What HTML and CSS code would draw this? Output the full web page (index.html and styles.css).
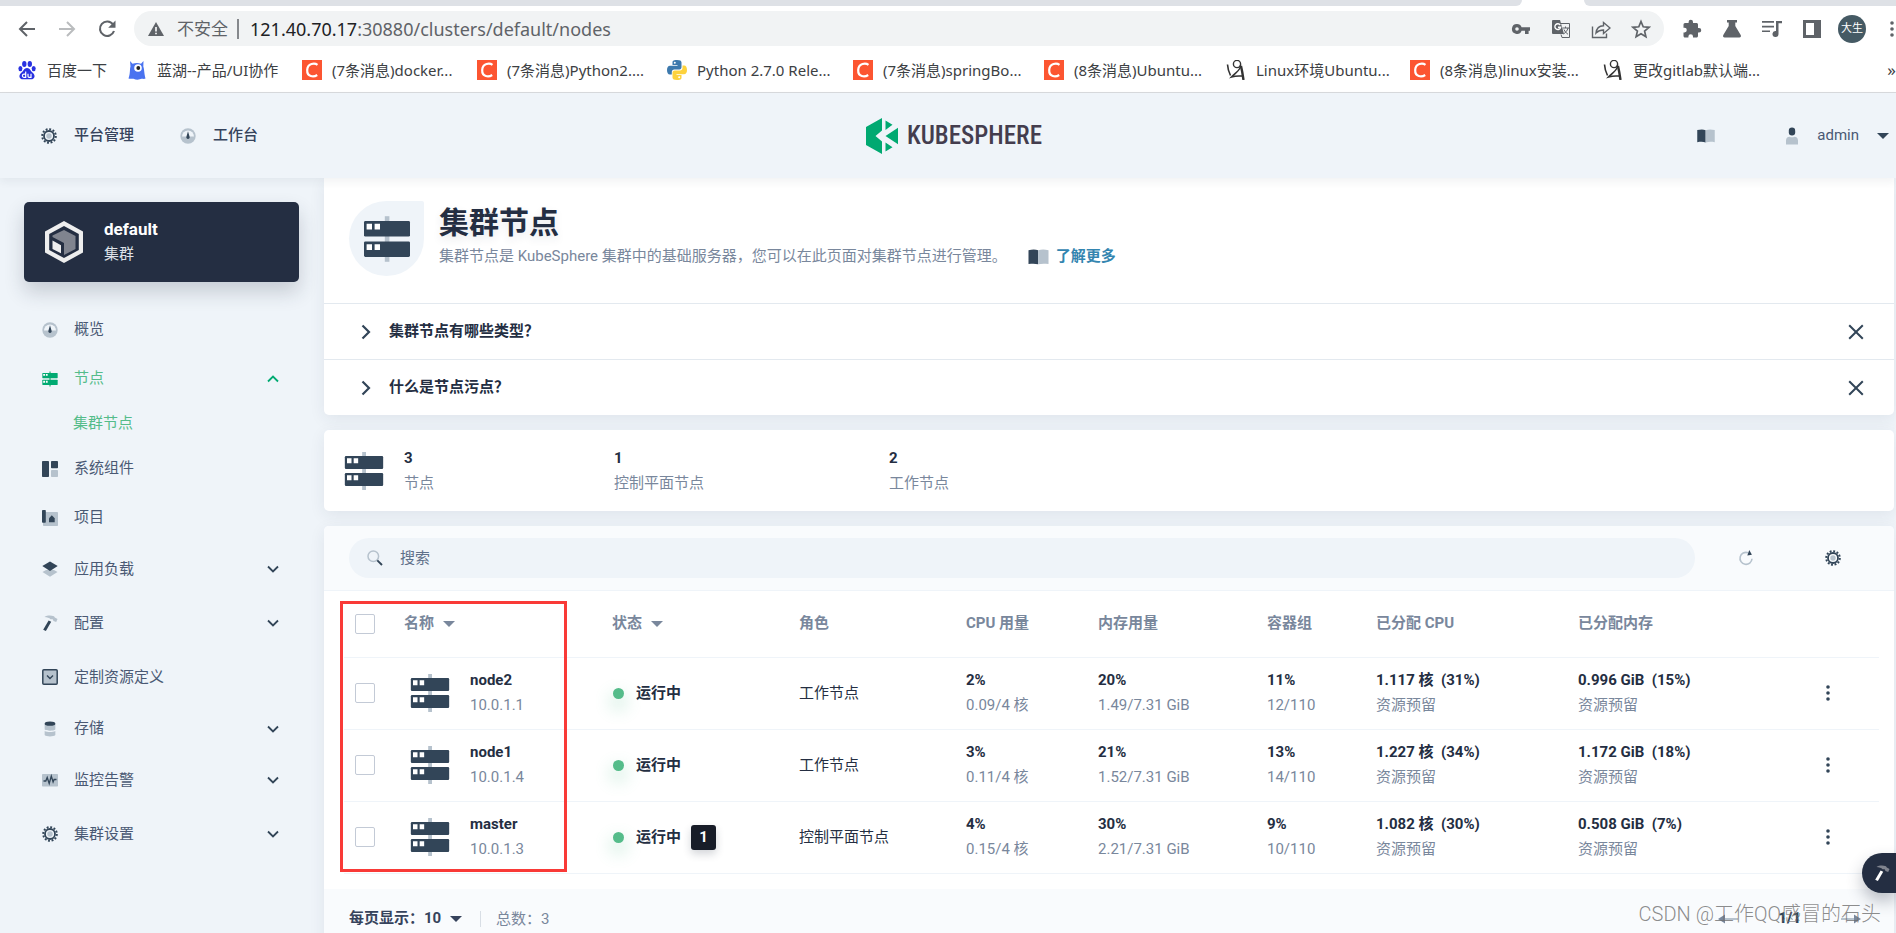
FILE: index.html
```html
<!DOCTYPE html>
<html lang="zh-CN">
<head>
<meta charset="utf-8">
<title>集群节点</title>
<link rel="stylesheet" href="styles.css">
</head>
<body>
<svg class="sprite" aria-hidden="true">
  <symbol id="i-server" viewBox="0 0 24 24">
    <path class="lite" d="M10.9.6h2.3v22.8h-2.3z"/>
    <rect x=".5" y="3" width="23" height="7.8" rx=".7"/>
    <rect x=".5" y="13.2" width="23" height="7.8" rx=".7"/>
    <path fill="#fff" d="M1.8 4.4h2.7v2.9H1.8zM5.8 4.4h2.7v2.9H5.8zM1.8 14.6h2.7v2.9H1.8zM5.8 14.6h2.7v2.9H5.8z"/>
  </symbol>
  <symbol id="i-gear" viewBox="0 0 16 16">
    <circle cx="8" cy="8" r="6.8" fill="none" stroke="currentColor" stroke-width="2" stroke-dasharray="1.9 1.66"/>
    <circle cx="8" cy="8" r="5" fill="none" stroke="currentColor" stroke-width="1.8"/>
    <circle class="lite" cx="8" cy="8" r="2.7"/>
  </symbol>
  <symbol id="i-gauge" viewBox="0 0 16 16">
    <circle class="lite" cx="8" cy="8" r="7.7"/>
    <path fill="#eff4f9" d="M2 8.4a6 6 0 0 1 12 0z"/>
    <path d="M8 3.2l1.6 5.6a1.7 1.7 0 1 1-3.2 0z"/>
  </symbol>
  <symbol id="i-book" viewBox="0 0 20 16">
    <path d="M0 1.2C4 .2 7 .2 9.6 1.3v14C7 14.500 4 14.500 0 15z"/>
    <path class="lite" d="M9.600 1.300C13 .2 16 .2 20 1.200V15c-4-.5-7-.5-10.400.3z"/>
  </symbol>
  <symbol id="i-user" viewBox="0 0 14 18">
    <rect x="3.800" y=".5" width="6.400" height="8" rx="3.200"/>
    <path class="lite" d="M1 17.500v-4C1 10.800 3 9.800 4.500 9.800c1.500.7 3.500.7 5 0 1.500 0 3.500 1 3.500 3.700v4z"/>
  </symbol>
  <symbol id="i-blocks" viewBox="0 0 16 16">
    <rect width="7" height="16" rx=".8"/><rect x="9" width="7" height="7.300" rx=".8"/>
    <rect class="lite" x="9" y="9" width="7" height="7" rx=".8"/>
  </symbol>
  <symbol id="i-project" viewBox="0 0 16 16">
    <rect class="lite" x="1" y="2" width="15" height="14" rx=".8"/>
    <rect width="3.800" height="12.800" rx=".8"/>
    <path d="M7 12.300V8.200l2.800-3 2.900 3v4.100z"/>
  </symbol>
  <symbol id="i-layers" viewBox="0 0 16 16">
    <path class="lite" d="M.5 11L4 9h8l3.500 2L8 15.800z"/>
    <path d="M8 .4l7.700 4.700L8 9.900.3 5.100z"/>
  </symbol>
  <symbol id="i-hammer" viewBox="0 0 16 16">
    <path class="lite" d="M2.500 2C5 .2 9 .1 12 1.200l.8 1.300 2.700 1.600-1.300 3-2.700-1.200-.8-1.600-2.200 0C7.500 2.800 5 2.200 2.500 2z"/>
    <path d="M6.600 5.500l2.600 1.200L3.900 16 1.200 14.800z"/>
  </symbol>
  <symbol id="i-crd" viewBox="0 0 16 16">
    <rect class="lite" x="1" y="1" width="14" height="14"/>
    <rect x=".8" y=".8" width="14.400" height="14.400" rx="1" fill="none" stroke="currentColor" stroke-width="1.500"/>
    <path fill="none" stroke="currentColor" stroke-width="1.400" d="M5 6.400l3 3 3-3"/>
  </symbol>
  <symbol id="i-storage" viewBox="0 0 16 18">
    <path class="lite" d="M2 3h12v6.500c-2 1.800-10 1.800-12 0zM2 11.200c3 1.500 9 1.500 12 0v4.600c-2 2.200-10 2.200-12 0z"/>
    <ellipse cx="8" cy="3" rx="6" ry="2.400"/>
  </symbol>
  <symbol id="i-monitor" viewBox="0 0 16 16">
    <rect class="lite" y="2" width="16" height="12.500" rx=".8"/>
    <path fill="none" stroke="currentColor" stroke-width="1.300" d="M1.500 9h2.300l1.400-3.500 2 6L9.300 4l1.800 6 1-2.500h2.400"/>
  </symbol>
  <symbol id="i-chev" viewBox="0 0 12 12"><path fill="none" stroke="currentColor" stroke-width="1.800" d="M1 3.500l5 5 5-5"/></symbol>
  <symbol id="i-right" viewBox="0 0 16 16"><path fill="none" stroke="currentColor" stroke-width="2.200" d="M4.500 1.500L11 8l-6.500 6.500"/></symbol>
  <symbol id="i-close" viewBox="0 0 16 16"><path fill="none" stroke="currentColor" stroke-width="2" d="M1.200 1.200l13.600 13.600M14.800 1.200L1.200 14.800"/></symbol>
  <symbol id="i-caret" viewBox="0 0 12 6"><path d="M0 0h12L6 6z"/></symbol>
  <symbol id="i-more" viewBox="0 0 4 16"><circle cx="2" cy="2" r="1.800"/><circle cx="2" cy="8" r="1.800"/><circle cx="2" cy="14" r="1.800"/></symbol>
  <symbol id="i-search" viewBox="0 0 16 16">
    <circle cx="6.300" cy="6.300" r="5.300" fill="none" stroke="#b6c2cd" stroke-width="1.500"/>
    <path stroke="currentColor" stroke-width="1.900" d="M10.300 10.300l4.700 4.700"/>
  </symbol>
  <symbol id="i-refresh" viewBox="0 0 16 16">
    <path fill="none" stroke="#b6c2cd" stroke-width="1.600" d="M10 2.700A6 6 0 1 0 14 8.800"/>
    <path d="M11.300 0l2.600 4.800-4.600.6z"/>
  </symbol>
  <symbol id="i-arrow" viewBox="0 0 20 12"><path d="M0 6l7-4.500v9z"/><path class="lite" d="M7 5h13v2H7z"/></symbol>
  <symbol id="i-csdn" viewBox="0 0 20 20"><path fill="#fc5531" d="M0 0h20v20H0z"/><path fill="none" stroke="#fff" stroke-width="2.200" d="M15.500 4.800C12.800 2.900 5.500 3 5.200 10s6.500 7.400 10 5"/></symbol>
  <symbol id="i-figure" viewBox="0 0 20 20"><g fill="none" stroke="#333"><circle cx="11" cy="4" r="3.600" stroke-width="1.400"/><path stroke-width="1.600" d="M1.500 4.500c.3 5 1.500 8 3 11M14.500 5c.8 5-5 7.500-9 12 5-1.500 7-1 10.500-1"/><path stroke-width="2.400" d="M15 6c1.200 5 1.800 9 2.500 14"/></g></symbol>
</svg>

<div class="tabstrip"><span class="tabs-left"></span><span class="tabs-right"></span></div>
<div class="toolbar">
  <div class="nav-buttons">
    <button type="button" aria-label="后退"><svg viewBox="0 0 20 20"><path fill="none" stroke="#5f6368" stroke-width="2" d="M18 10H3M10 3l-7 7 7 7"/></svg></button>
    <button type="button" aria-label="前进"><svg viewBox="0 0 20 20"><path fill="none" stroke="#babcbe" stroke-width="2" d="M2 10h15M10 3l7 7-7 7"/></svg></button>
    <button type="button" aria-label="刷新"><svg viewBox="0 0 20 20"><path fill="none" stroke="#5f6368" stroke-width="2.100" d="M16 5.500A7.200 7.200 0 1 0 17 12"/><path d="M18.500 1.500v7.300h-7.300z"/></svg></button>
  </div>
  <div class="omnibox">
    <svg class="warn" viewBox="0 0 16 16"><path d="M8 1l8 14H0z"/><path fill="#fff" d="M7.200 6h1.600v4.500H7.200zM7.200 11.700h1.600v1.600H7.200z"/></svg>
    <span class="insecure">不安全</span><span class="sep"></span>
    <span class="url"><b>121.40.70.17</b>:30880/clusters/default/nodes</span>
    <div class="omni-icons">
      <button type="button" aria-label="密码"><svg viewBox="0 0 20 20"><path fill-rule="evenodd" d="M6 5a5 5 0 1 0 4.600 6.800H14V15h3.600v-3.200H19V8.200h-8.400A5 5 0 0 0 6 5zm0 3.200a1.800 1.800 0 1 1 0 3.600 1.800 1.800 0 0 1 0-3.600z"/></svg></button>
      <button type="button" aria-label="翻译"><svg viewBox="0 0 20 20"><path d="M2 1h7l4 14H2a1 1 0 0 1-1-1V2a1 1 0 0 1 1-1z"/><path fill="none" stroke="#fff" stroke-width="1.400" d="M9.200 6A2.900 2.900 0 1 0 9.600 8.300H7"/><path fill="none" stroke="#5f6368" d="M10 4.500h8.500v14H11l-1-3M11.500 9h6.500M14.500 7.500V9M17 9c-.7 3-2.500 4.500-4.500 6M13 10.500c1 2.500 2.500 3.500 4 4.800"/></svg></button>
      <button type="button" aria-label="分享"><svg viewBox="0 0 20 20"><path fill="none" stroke="#5f6368" stroke-width="1.400" d="M1.500 7.500v11h14v-4M5 14c.5-4.500 3-7 7.500-7.200V3.500L19 9l-6.500 5.500V11C9 11 7 12 5 14z"/></svg></button>
      <button type="button" aria-label="收藏"><svg viewBox="0 0 20 20"><path fill="none" stroke="#5f6368" stroke-width="1.700" d="M10 2.500l2.200 5.300 5.800.5-4.400 3.800 1.300 5.600L10 14.700l-4.900 3 1.300-5.600L2 8.300l5.800-.5z"/></svg></button>
    </div>
  </div>
  <div class="ext-icons">
    <button type="button" aria-label="扩展"><svg viewBox="0 0 20 20"><path d="M17 9h-1V5.500c0-.8-.7-1.500-1.500-1.500H11V3a2.200 2.200 0 0 0-4.400 0v1H3a1.500 1.500 0 0 0-1.500 1.500v3.300h1a2.300 2.300 0 0 1 0 4.600h-1V17c0 .8.7 1.500 1.500 1.500h3.400v-1a2.300 2.300 0 0 1 4.600 0v1h3.500c.8 0 1.500-.7 1.500-1.500v-3.500h1A2.250 2.250 0 0 0 17 9z"/></svg></button>
    <button type="button" aria-label="实验"><svg viewBox="0 0 20 20"><path d="M5 1h10v2.500h-1.700V7l5.400 9c.7 1.200 0 2.500-1.300 2.500H2.600c-1.300 0-2-1.300-1.300-2.500l5.400-9V3.500H5z"/></svg></button>
    <button type="button" aria-label="媒体"><svg viewBox="0 0 20 20"><path d="M0 2h12v1.700H0zM0 6.700h12v1.700H0zM0 11.400h8v1.700H0zM14 2h6v2.200h-3.500V15a3 3 0 1 1-2.500-3z"/></svg></button>
    <button type="button" aria-label="侧边栏"><svg viewBox="0 0 20 20"><path fill-rule="evenodd" d="M1 1h18v18H1zM4 4v12h8V4z"/></svg></button>
    <button type="button" class="avatar">大生</button>
    <button type="button" class="menu" aria-label="菜单"><svg><use href="#i-more"/></svg></button>
  </div>
</div>
<nav class="bookmarks" aria-label="书签">
  <a href="#"><svg class="baidu" viewBox="0 0 20 20"><ellipse cx="7.300" cy="4" rx="2.200" ry="3"/><ellipse cx="12.800" cy="4" rx="2.200" ry="3"/><ellipse cx="3.400" cy="8.600" rx="2" ry="2.700"/><ellipse cx="16.700" cy="8.600" rx="2" ry="2.700"/><path d="M10 8c3 0 3.500 3 5.500 4.500 4 3.500 1.500 7-1.500 6.800H6c-3 .2-5.500-3.300-1.500-6.800C6.500 11 7 8 10 8z"/><path fill="none" stroke="#fff" stroke-width="1.200" d="M8.700 11.500v5.800H7a1.500 1.500 0 0 1 0-3.200h1.700M11 13.700v2.600q0 1 1 1h2v-3.600"/></svg>百度一下</a>
  <a href="#"><svg viewBox="0 0 20 20"><path fill="#4a73f0" d="M3 1l2.500 2.800Q10 2.300 14 3.800L16.500 1l-.2 5.500C17.500 10 17 13 18.500 18.500c-1.500 1-3 0-4 .3-2 1-5.500 1.200-8 0-1.500-.5-3 .6-5-.3C3.500 13 2.500 10 3.500 6.500z"/><circle cx="11" cy="8" r="3.800" fill="#fff"/><circle cx="11.300" cy="8" r="1.900" fill="#222"/></svg>蓝湖--产品/UI协作</a>
  <a href="#"><svg><use href="#i-csdn"/></svg>(7条消息)docker...</a>
  <a href="#"><svg><use href="#i-csdn"/></svg>(7条消息)Python2....</a>
  <a href="#"><svg viewBox="0 0 20 20"><path fill="#3d79ad" d="M10 0C5.500 0 5.500 1.500 5.500 2.500V5h5v.8H3C1 5.800 0 7.500 0 10s1 4.500 2.800 4.500h2V12c0-1.500 1-2.500 2.500-2.500h5c1.500 0 2.200-1 2.200-2.200V2.500C14.500.8 13 0 10 0z"/><path fill="#fdd23c" d="M10 20c4.500 0 4.500-1.500 4.500-2.500V15h-5v-.8H17c2 0 3-1.700 3-4.200s-1-4.500-2.800-4.500h-1.700V8c0 1.500-1 2.500-2.500 2.500H7.700c-1.500 0-2.200 1-2.200 2.200v4.800c0 1.700 1.500 2.500 4.500 2.500z"/><circle cx="7.800" cy="2.700" r="1" fill="#fff"/><circle cx="12.200" cy="17.300" r="1" fill="#fff"/></svg>Python 2.7.0 Rele...</a>
  <a href="#"><svg><use href="#i-csdn"/></svg>(7条消息)springBo...</a>
  <a href="#"><svg><use href="#i-csdn"/></svg>(8条消息)Ubuntu...</a>
  <a href="#"><svg><use href="#i-figure"/></svg>Linux环境Ubuntu...</a>
  <a href="#"><svg><use href="#i-csdn"/></svg>(8条消息)linux安装...</a>
  <a href="#"><svg><use href="#i-figure"/></svg>更改gitlab默认端...</a>
  <button type="button" class="overflow" aria-label="更多书签">»</button>
</nav>

<header class="topbar">
  <nav class="topnav">
    <a href="#"><svg class="ic16"><use href="#i-gear"/></svg>平台管理</a>
    <a href="#"><svg class="ic16"><use href="#i-gauge"/></svg>工作台</a>
  </nav>
  <a class="logo" href="#"><svg viewBox="0 0 32 36"><path fill="#00a971" d="M16 0v12.500L9.500 18l6.500 5.500V36L0 27V9zM19.500 2.500l7 4.200-7 5.300zM32 9.800v16.500L19.500 18zM19.500 24.500l7 4.800-7 4.200z"/></svg><span>KUBESPHERE</span></a>
  <div class="userbar">
    <a href="#" aria-label="文档"><svg class="book-sm"><use href="#i-book"/></svg></a>
    <button type="button" class="user"><svg class="user-ic"><use href="#i-user"/></svg><span>admin</span><svg class="caret"><use href="#i-caret"/></svg></button>
  </div>
</header>

<div class="layout">
  <aside class="sidebar">
    <div class="cluster">
      <svg viewBox="0 0 38 42"><path fill="#eee" fill-rule="evenodd" d="M19 0l19 10.500v21L19 42 0 31.500v-21zm0 5L4.200 13v16L19 37l14.800-8V13z"/><path fill="#80848f" d="M19 9l11.500 6v13L19 34V22L7.500 16v-1.500z"/><path fill="#eee" d="M7.500 19.500l8.500 4.800v8L7.500 28z"/></svg>
      <div><strong>default</strong><span>集群</span></div>
    </div>
    <nav class="menu-list">
      <a href="#"><svg class="ic16"><use href="#i-gauge"/></svg>概览</a>
      <a href="#" class="on"><svg class="ic16 solid"><use href="#i-server"/></svg>节点<svg class="chev up"><use href="#i-chev"/></svg></a>
      <a href="#" class="sub">集群节点</a>
      <a href="#"><svg class="ic16"><use href="#i-blocks"/></svg>系统组件</a>
      <a href="#"><svg class="ic16"><use href="#i-project"/></svg>项目</a>
      <a href="#" class="tall"><svg class="ic16"><use href="#i-layers"/></svg>应用负载<svg class="chev"><use href="#i-chev"/></svg></a>
      <a href="#" class="tall"><svg class="ic16"><use href="#i-hammer"/></svg>配置<svg class="chev"><use href="#i-chev"/></svg></a>
      <a href="#" class="tall"><svg class="ic16"><use href="#i-crd"/></svg>定制资源定义</a>
      <a href="#"><svg class="ic16"><use href="#i-storage"/></svg>存储<svg class="chev"><use href="#i-chev"/></svg></a>
      <a href="#" class="tall"><svg class="ic16"><use href="#i-monitor"/></svg>监控告警<svg class="chev"><use href="#i-chev"/></svg></a>
      <a href="#" class="tall"><svg class="ic16"><use href="#i-gear"/></svg>集群设置<svg class="chev"><use href="#i-chev"/></svg></a>
    </nav>
  </aside>

  <main class="content">
    <section class="card banner">
      <div class="banner-head">
        <div class="banner-icon"><svg><use href="#i-server"/></svg></div>
        <div>
          <h1>集群节点</h1>
          <p>集群节点是 KubeSphere 集群中的基础服务器，您可以在此页面对集群节点进行管理。<a href="#"><svg><use href="#i-book"/></svg>了解更多</a></p>
        </div>
      </div>
      <div class="tip"><button type="button" class="tip-toggle"><svg><use href="#i-right"/></svg>集群节点有哪些类型？</button><button type="button" aria-label="关闭"><svg><use href="#i-close"/></svg></button></div>
      <div class="tip"><button type="button" class="tip-toggle"><svg><use href="#i-right"/></svg>什么是节点污点？</button><button type="button" aria-label="关闭"><svg><use href="#i-close"/></svg></button></div>
    </section>

    <section class="card stats">
      <svg class="ic40"><use href="#i-server"/></svg>
      <div class="pair"><strong>3</strong><span>节点</span></div>
      <div class="pair"><strong>1</strong><span>控制平面节点</span></div>
      <div class="pair"><strong>2</strong><span>工作节点</span></div>
    </section>

    <section class="card list">
      <div class="list-bar">
        <label class="search"><svg class="ic16"><use href="#i-search"/></svg><input type="text" placeholder="搜索" aria-label="搜索"></label>
        <button type="button" aria-label="刷新"><svg class="ic16"><use href="#i-refresh"/></svg></button>
        <button type="button" aria-label="设置"><svg class="ic16"><use href="#i-gear"/></svg></button>
      </div>
      <div class="table-wrap">
        <table>
          <colgroup><col class="c-check"><col class="c-name"><col class="c-status"><col class="c-role"><col class="c-cpu"><col class="c-mem"><col class="c-pod"><col class="c-acpu"><col><col class="c-more"></colgroup>
          <thead><tr>
            <th><input type="checkbox" aria-label="全选"></th>
            <th><button type="button">名称<svg class="caret"><use href="#i-caret"/></svg></button></th>
            <th><button type="button">状态<svg class="caret"><use href="#i-caret"/></svg></button></th>
            <th>角色</th><th>CPU 用量</th><th>内存用量</th><th>容器组</th><th>已分配 CPU</th><th>已分配内存</th><th></th>
          </tr></thead>
          <tbody>
            <tr>
              <td><input type="checkbox" aria-label="选择 node2"></td>
              <td><div class="node"><svg class="ic40"><use href="#i-server"/></svg><div class="pair"><strong>node2</strong><span>10.0.1.1</span></div></div></td>
              <td><div class="status"><i></i>运行中</div></td><td>工作节点</td>
              <td><div class="pair"><strong>2%</strong><span>0.09/4 核</span></div></td>
              <td><div class="pair"><strong>20%</strong><span>1.49/7.31 GiB</span></div></td>
              <td><div class="pair"><strong>11%</strong><span>12/110</span></div></td>
              <td><div class="pair"><strong>1.117 核&nbsp; (31%)</strong><span>资源预留</span></div></td>
              <td><div class="pair"><strong>0.996 GiB&nbsp; (15%)</strong><span>资源预留</span></div></td>
              <td><button type="button" class="more" aria-label="更多操作"><svg class="dots"><use href="#i-more"/></svg></button></td>
            </tr>
            <tr>
              <td><input type="checkbox" aria-label="选择 node1"></td>
              <td><div class="node"><svg class="ic40"><use href="#i-server"/></svg><div class="pair"><strong>node1</strong><span>10.0.1.4</span></div></div></td>
              <td><div class="status"><i></i>运行中</div></td><td>工作节点</td>
              <td><div class="pair"><strong>3%</strong><span>0.11/4 核</span></div></td>
              <td><div class="pair"><strong>21%</strong><span>1.52/7.31 GiB</span></div></td>
              <td><div class="pair"><strong>13%</strong><span>14/110</span></div></td>
              <td><div class="pair"><strong>1.227 核&nbsp; (34%)</strong><span>资源预留</span></div></td>
              <td><div class="pair"><strong>1.172 GiB&nbsp; (18%)</strong><span>资源预留</span></div></td>
              <td><button type="button" class="more" aria-label="更多操作"><svg class="dots"><use href="#i-more"/></svg></button></td>
            </tr>
            <tr>
              <td><input type="checkbox" aria-label="选择 master"></td>
              <td><div class="node"><svg class="ic40"><use href="#i-server"/></svg><div class="pair"><strong>master</strong><span>10.0.1.3</span></div></div></td>
              <td><div class="status"><i></i>运行中<em>1</em></div></td><td>控制平面节点</td>
              <td><div class="pair"><strong>4%</strong><span>0.15/4 核</span></div></td>
              <td><div class="pair"><strong>30%</strong><span>2.21/7.31 GiB</span></div></td>
              <td><div class="pair"><strong>9%</strong><span>10/110</span></div></td>
              <td><div class="pair"><strong>1.082 核&nbsp; (30%)</strong><span>资源预留</span></div></td>
              <td><div class="pair"><strong>0.508 GiB&nbsp; (7%)</strong><span>资源预留</span></div></td>
              <td><button type="button" class="more" aria-label="更多操作"><svg class="dots"><use href="#i-more"/></svg></button></td>
            </tr>
          </tbody>
        </table>
        <div class="highlight"></div>
      </div>
      <footer class="pager">
        <label for="size">每页显示：</label>
        <select id="size"><option>10</option><option>20</option></select>
        <svg class="caret"><use href="#i-caret"/></svg>
        <span class="total">总数：3</span>
        <div class="pages"><button type="button" aria-label="上一页"><svg><use href="#i-arrow"/></svg></button><strong>1/1</strong><button type="button" class="next" aria-label="下一页"><svg><use href="#i-arrow"/></svg></button></div>
      </footer>
    </section>
  </main>
</div>
<button type="button" class="toolbox" aria-label="工具箱"><svg class="ic16"><use href="#i-hammer"/></svg></button>
<div class="watermark">CSDN @工作QQ感冒的石头</div>
</body>
</html>
```
FILE: styles.css
```css
* { box-sizing: border-box; }
body {
  margin: 0;
  height: 100vh;
  display: flex;
  flex-direction: column;
  overflow: hidden;
  position: relative;
  background: #eff4f9;
  color: #242e42;
  font: 15px/25px Roboto, "Noto Sans CJK SC", sans-serif;
}
button, input, select { font: inherit; color: inherit; border: 0; padding: 0; margin: 0; background: none; }
button { display: inline-flex; align-items: center; }
a { color: inherit; text-decoration: none; }
svg { display: block; flex: none; fill: currentColor; }
.lite { fill: var(--lite, #b6c2cd); }
.sprite { position: absolute; width: 0; height: 0; }
.ic16 { width: 16px; height: 16px; color: #324558; }
.ic40 { width: 40px; height: 40px; color: #324558; }
.caret { width: 12px; height: 6px; }

/* Browser chrome */
.tabstrip { display: flex; justify-content: space-between; gap: 62px; height: 6px; background: #fff; flex: none; }
.tabstrip span { background: #dee1e6; }
.tabs-left { flex: 1; border-bottom-right-radius: 12px; }
.tabs-right { width: 312px; border-bottom-left-radius: 12px; }
.toolbar { display: flex; align-items: center; flex: none; height: 45px; background: #fff; color: #5f6368; }
.toolbar svg { width: 20px; height: 20px; }
.nav-buttons { display: flex; gap: 20px; padding: 0 17px; }
.omnibox { flex: 1; display: flex; align-items: center; height: 35px; padding: 0 13px 0 14px; border-radius: 18px; background: #f1f3f4; font: 17px/24px "Noto Sans", "Noto Sans CJK SC", sans-serif; }
.omnibox .warn { width: 16px; height: 16px; margin-right: 13px; }
.sep { width: 2px; height: 20px; margin: 0 11px 0 9px; background: #85888c; }
.url { font-size: 18px; }
.url b { font-weight: 400; color: #202124; }
.omni-icons { display: flex; gap: 20px; margin-left: auto; }
.ext-icons { display: flex; align-items: center; padding-left: 8px; }
.ext-icons button { width: 40px; justify-content: center; }
.ext-icons .avatar { width: 28px; height: 28px; margin: 0 6px; border-radius: 50%; background: #455a64; color: #fff; font-size: 11px; }
.ext-icons .menu { width: 24px; justify-content: flex-end; }
.ext-icons .menu svg { width: 8px; height: 16px; }
.bookmarks { display: grid; grid-template-columns: 110px 175px 175px 190px 186px 191px 182px 184px 193px 1fr auto; align-items: center; flex: none; height: 42px; padding: 0 0 4px 17px; background: #fff; border-bottom: 1px solid #d8dadd; color: #3c4043; font: 15px/20px "Noto Sans", "Noto Sans CJK SC", sans-serif; }
.bookmarks a { display: flex; align-items: center; gap: 10px; white-space: nowrap; }
.bookmarks svg { width: 20px; height: 20px; }
.bookmarks .baidu { color: #2932e1; }
.overflow { font-size: 17px; }

/* Platform header */
.topbar { position: relative; z-index: 2; display: grid; grid-template-columns: 1fr auto 1fr; align-items: center; flex: none; height: 85px; padding: 0 7px 0 5px; background: #eff4f9; box-shadow: 0 4px 8px rgba(36, 46, 66, .06); }
.topnav { display: flex; gap: 46px; padding-left: 36px; font-weight: 500; color: #36435c; }
.topnav a { display: flex; align-items: center; gap: 17px; }
.logo { display: flex; align-items: center; gap: 9px; margin-left: 14px; color: #443d4e; font: 500 25px/28px "Liberation Sans Narrow", "Roboto Condensed", Roboto, sans-serif; }
.logo svg { width: 32px; height: 36px; }
.userbar { display: flex; justify-content: flex-end; align-items: center; gap: 70px; color: #4a5974; }
.userbar svg { color: #324558; }
.book-sm { width: 18px; height: 14px; }
.user { gap: 18px; }
.user .user-ic { width: 14px; height: 18px; }

/* Sidebar */
.layout { flex: 1; min-height: 0; display: flex; }
.sidebar { width: 324px; flex: none; padding: 24px 25px 0 24px; }
.cluster { display: flex; align-items: center; gap: 21px; height: 80px; padding-left: 21px; border-radius: 5px; background: #242e42; color: #fff; box-shadow: 0 10px 20px rgba(36, 46, 66, .2); }
.cluster > svg { width: 38px; height: 42px; }
.cluster strong, .cluster span { display: block; }
.cluster strong { font-size: 17px; }
.cluster span { color: #dde1e8; }
.menu-list { display: flex; flex-direction: column; padding: 23px 20px 0 18px; color: #4a5974; }
.menu-list a { display: flex; align-items: center; gap: 16px; height: 49px; }
.menu-list .tall { height: 54px; }
.menu-list .on, .menu-list .sub { color: #55bc8a; }
.menu-list .sub { height: 41px; padding-left: 31px; }
.menu-list .on svg { color: #00aa72; }
.solid { --lite: #55bc8a; }
.chev { width: 12px; height: 12px; margin-left: auto; color: #324558; }
.chev.up { transform: rotate(180deg); }

/* Content */
.content { flex: 1; min-width: 0; display: flex; flex-direction: column; gap: 15px; padding-right: 2px; }
.card { flex: none; border-radius: 5px; background: #fff; box-shadow: 0 4px 16px rgba(39, 50, 71, .08); }
.banner { border-radius: 0 0 5px 5px; }
.banner-head { display: flex; gap: 15px; height: 125px; padding: 23px 25px 0; }
.banner-icon { display: grid; place-items: center; width: 75px; height: 75px; border-radius: 50% 2px 50% 50%; background: #eff4f9; color: #324558; }
.banner-icon svg { width: 48px; height: 48px; }
.banner h1 { margin: 0; font-size: 30px; line-height: 43px; font-weight: 700; text-shadow: 0 4px 8px rgba(36, 46, 66, .1); }
.banner p { display: flex; margin: 0; color: #79879c; }
.banner p a { display: flex; align-items: center; gap: 7px; margin-left: 21px; color: #3385b0; font-weight: 700; }
.banner p svg { width: 21px; height: 16px; color: #324558; }
.tip { display: flex; align-items: center; justify-content: space-between; height: 56px; padding: 0 30px 0 34px; border-top: 1px solid #e3e9ef; }
.tip svg { width: 16px; height: 16px; color: #324558; }
.tip-toggle { gap: 15px; font-weight: 700; }
.pair { display: flex; flex-direction: column; }
.pair span { color: #79879c; }
.stats { display: grid; grid-template-columns: 60px 210px 275px 1fr; align-items: center; height: 81px; padding-left: 20px; }
.list-bar { display: flex; align-items: center; height: 65px; padding: 0 53px 0 25px; border-bottom: 1px solid #eff4f9; border-radius: 5px 5px 0 0; background: #f9fbfd; }
.list-bar button { margin-left: 71px; }
.search + button { margin-left: 43px; }
.search { flex: 1; display: flex; align-items: center; gap: 17px; height: 40px; padding: 0 18px; border-radius: 20px; background: #eff4f9; }
.search input { flex: 1; outline: 0; }
.search input::placeholder { color: #5f708a; opacity: 1; }
.table-wrap { position: relative; padding: 0 15px 15px 20px; }
table { width: 100%; table-layout: fixed; border-collapse: collapse; }
.c-check { width: 60px; }
.c-name { width: 208px; }
.c-status { width: 187px; }
.c-role { width: 167px; }
.c-cpu { width: 132px; }
.c-mem { width: 169px; }
.c-pod { width: 109px; }
.c-acpu { width: 202px; }
.c-more { width: 53px; }
th, td { height: 72px; padding: 0; text-align: left; vertical-align: middle; border-bottom: 1px solid #eff4f9; }
th { height: 66px; color: #79879c; font-weight: 700; }
th button { gap: 9px; }
input[type="checkbox"] { display: block; appearance: none; width: 20px; height: 20px; margin-left: 11px; border: 1px solid #c3cad6; border-radius: 2px; background: #fff; }
.node { display: flex; align-items: center; gap: 20px; padding-left: 6px; }
.status { display: flex; align-items: center; font-weight: 700; }
.status i { width: 11px; height: 11px; margin: 0 12px 0 1px; border-radius: 50%; background: #55bc8a; box-shadow: 0 8px 16px 4px rgba(85, 188, 138, .2); }
.status em { width: 25px; margin-left: 10px; border-radius: 3px; background: #181d28; color: #fff; font-style: normal; text-align: center; box-shadow: 0 4px 8px rgba(36, 46, 66, .2); }
.more { display: flex; }
.dots { width: 4px; height: 16px; color: #324558; }
.highlight { position: absolute; left: 16px; top: 10px; width: 227px; height: 271px; border: 3px solid #f93a37; pointer-events: none; }
.pager { display: flex; align-items: center; height: 60px; padding: 0 33px 0 25px; background: #f9fbfd; font-weight: 700; color: #36435c; }
.pager select { appearance: none; width: 26px; }
.total { margin-left: 18px; padding-left: 15px; border-left: 1px solid #d8dee5; line-height: 16px; color: #79879c; font-weight: 400; }
.pages { display: flex; align-items: center; gap: 40px; margin-left: auto; color: #324558; }
.pages svg { width: 20px; height: 12px; color: #79879c; }
.pages .next { transform: rotate(180deg); }

/* Overlays */
.toolbox { position: absolute; z-index: 3; right: 0; top: 853px; width: 34px; height: 40px; padding-left: 12px; border-radius: 20px 0 0 20px; background: #242e42; box-shadow: 0 8px 16px rgba(36, 46, 66, .3); }
.toolbox svg { color: #fff; --lite: #80848f; }
.watermark { position: absolute; z-index: 4; right: 15px; top: 899px; color: rgba(110, 110, 110, .8); font-size: 20px; font-weight: 300; line-height: 30px; }
```
